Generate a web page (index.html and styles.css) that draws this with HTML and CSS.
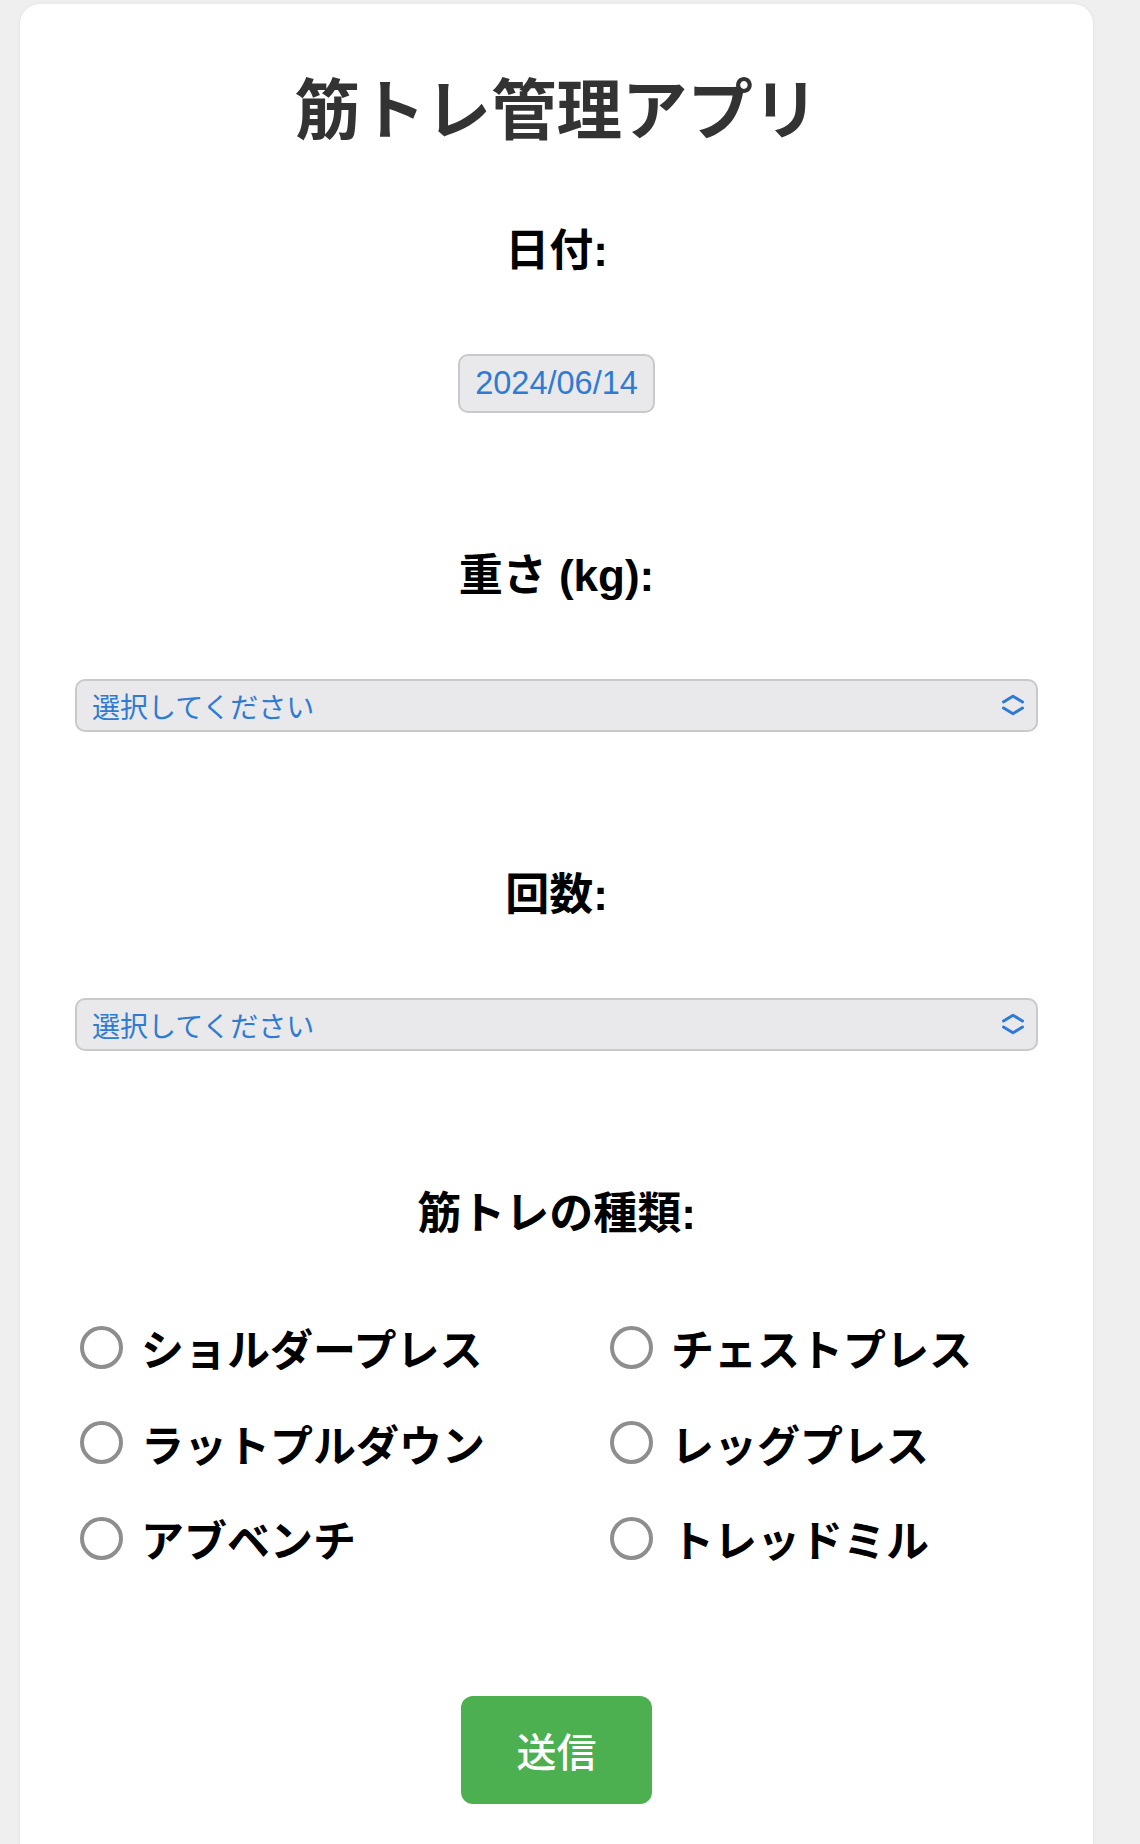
FILE: index.html
```html
<html>
<head>
<meta charset="utf-8">
<title>筋トレ管理アプリ</title>
<link rel="stylesheet" href="styles.css">
</head>
<body>
<div class="container">
	<h1 class="title">筋トレ管理アプリ</h1>
	<form class="workout_form">
		<div class="form_group">
			<label class="field_label" for="date">日付:</label>
			<input class="date_input" type="text" id="date" name="date" value="2024/06/14">
		</div>
		<div class="form_group">
			<label class="field_label" for="weight">重さ (kg):</label>
			<div class="select_wrap">
				<select class="pick" id="weight" name="weight">
					<option value="">選択してください</option>
				</select>
				<svg class="chevron" width="22" height="22" viewBox="0 0 22 22"><path d="M1.5 8 L11 2.3 L20.5 8 M1.5 14 L11 19.7 L20.5 14" fill="none" stroke="#2f7bd4" stroke-width="3" stroke-linecap="round" stroke-linejoin="round"/></svg>
			</div>
		</div>
		<div class="form_group">
			<label class="field_label" for="reps">回数:</label>
			<div class="select_wrap">
				<select class="pick" id="reps" name="reps">
					<option value="">選択してください</option>
				</select>
				<svg class="chevron" width="22" height="22" viewBox="0 0 22 22"><path d="M1.5 8 L11 2.3 L20.5 8 M1.5 14 L11 19.7 L20.5 14" fill="none" stroke="#2f7bd4" stroke-width="3" stroke-linecap="round" stroke-linejoin="round"/></svg>
			</div>
		</div>
		<div class="form_group">
			<div class="field_label">筋トレの種類:</div>
			<div class="radio_grid">
				<label class="radio_item"><input type="radio" name="type" value="shoulder">ショルダープレス</label>
				<label class="radio_item"><input type="radio" name="type" value="chest">チェストプレス</label>
				<label class="radio_item"><input type="radio" name="type" value="latpull">ラットプルダウン</label>
				<label class="radio_item"><input type="radio" name="type" value="leg">レッグプレス</label>
				<label class="radio_item"><input type="radio" name="type" value="ab">アブベンチ</label>
				<label class="radio_item"><input type="radio" name="type" value="tread">トレッドミル</label>
			</div>
		</div>
		<div class="submit_row">
			<button class="submit_btn" type="button">送信</button>
		</div>
	</form>
</div>
</body>
</html>
```

FILE: styles.css
```css
body {
	margin: 0;
	background: #efefef;
	font-family: "Liberation Sans", "Noto Sans CJK JP", sans-serif;
	color: #000;
}
.container {
	width: 1073px;
	min-height: 1840px;
	box-sizing: border-box;
	margin: 4px 0 0 20px;
	padding: 68px 55px 40px;
	background: #fff;
	border-radius: 20px 20px 0 0;
	box-shadow: 0 0 4px rgba(0, 0, 0, 0.06);
}
.title {
	margin: 0;
	font-size: 65.5px;
	line-height: 80px;
	font-weight: bold;
	text-align: center;
	color: #333;
}
.form_group {
	margin-top: 70px;
}
.form_group + .form_group {
	margin-top: 134px;
}
.field_label {
	display: block;
	margin-bottom: 78px;
	padding-top: 4px;
	font-size: 44px;
	line-height: 50px;
	font-weight: bold;
	text-align: center;
}
.date_input {
	display: block;
	width: 197px;
	height: 59px;
	box-sizing: border-box;
	margin: 0 auto;
	padding: 0;
	border: 2px solid #c9c9cc;
	border-radius: 10px;
	background: #e9e9eb;
	font-family: "Liberation Sans", sans-serif;
	font-size: 32.5px;
	color: #2f7bd4;
	text-align: center;
}
.select_wrap {
	position: relative;
}
.pick {
	-webkit-appearance: none;
	appearance: none;
	display: block;
	width: 100%;
	height: 53px;
	box-sizing: border-box;
	margin: 0;
	padding: 0 60px 0 15px;
	border: 2px solid #c9c9cc;
	border-radius: 10px;
	background: #e9e9eb;
	font-family: "Noto Sans CJK JP", sans-serif;
	font-size: 28px;
	color: #2f7bd4;
}
.chevron {
	position: absolute;
	right: 14px;
	top: 15px;
}
.radio_grid {
	display: grid;
	grid-template-columns: 530px 1fr;
	row-gap: 45.5px;
	padding: 5px 0 0 5px;
}
.radio_item {
	display: flex;
	align-items: center;
	gap: 18px;
	height: 50px;
	font-family: "Noto Sans CJK JP", sans-serif;
	font-size: 43px;
	line-height: 50px;
	font-weight: bold;
}
.radio_item input {
	-webkit-appearance: none;
	appearance: none;
	width: 43px;
	height: 43px;
	box-sizing: border-box;
	margin: 0;
	border: 4px solid #8e8e90;
	border-radius: 50%;
	background: #fff;
	flex: none;
}
.submit_row {
	margin-top: 133px;
	text-align: center;
}
.submit_btn {
	width: 191px;
	height: 108px;
	border: none;
	border-radius: 12px;
	background: #4caf50;
	color: #fff;
	font-family: "Noto Sans CJK JP", sans-serif;
	font-size: 40px;
	font-weight: 500;
	padding: 0;
}
```
